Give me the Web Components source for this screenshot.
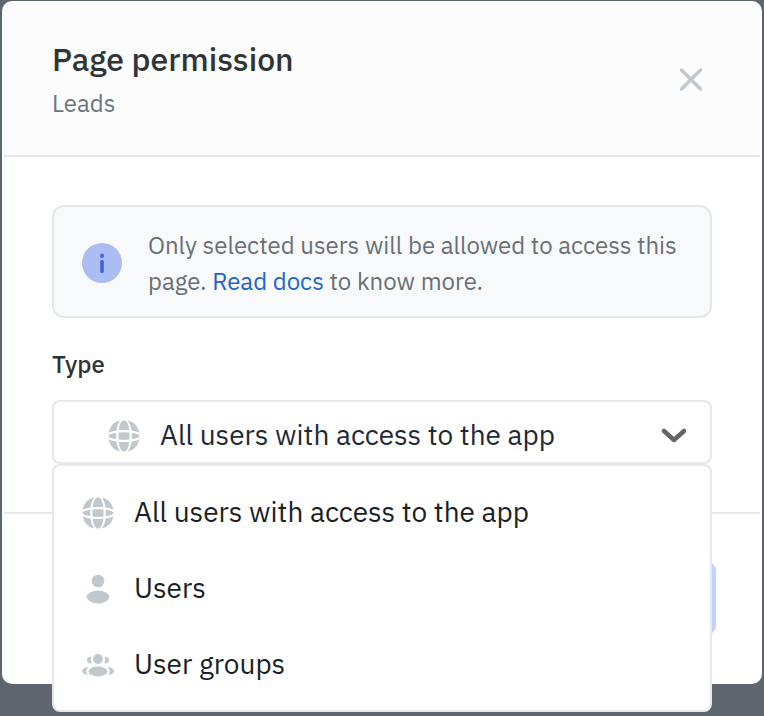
<!DOCTYPE html>
<html lang="en">
<head>
<meta charset="utf-8">
<meta name="viewport" content="width=device-width, initial-scale=1">
<title>Page permission</title>
<style>
	body {
		margin: 0;
		padding: 1px 2px 32px;
		background: #5D656F;
		color: #2F3437;
		font-family: "IBM Plex Sans", Roboto, "Liberation Sans", sans-serif;
		font-size: 24px;
		line-height: 36px;
	}
</style>
</head>
<body>
<perm-dialog heading="Page permission" subheading="Leads">
	<perm-info>Only selected users will be allowed to access this page. <a href="#docs">Read docs</a> to know more.</perm-info>
	<perm-select label="Type"></perm-select>
</perm-dialog>

<script>
const icons = {
	globe: `<path d="M12 0.500C5.500 2 1.800 6.500 0.600 12.700Q3.500 11 8.400 10.400Q9 4.500 12 0.500ZM20 0.500C26.500 2 30.200 6.500 31.400 12.700Q28.500 11 23.600 10.400Q23 4.500 20 0.500Z" fill="currentColor"/>
		<path d="M12 31.500C5.500 30 1.800 25.500 0.600 19.300Q3.500 21 8.400 21.600Q9 27.500 12 31.500ZM20 31.500C26.500 30 30.200 25.500 31.400 19.300Q28.500 21 23.600 21.600Q23 27.500 20 31.500Z" fill="currentColor"/>
		<path d="M10.700 10.200Q11.800 0.500 16 0.200Q20.200 0.500 21.300 10.200Q16 9.800 10.700 10.200ZM10.700 21.800Q11.800 31.500 16 31.800Q20.200 31.500 21.300 21.800Q16 22.200 10.700 21.800Z" fill="currentColor"/>
		<path d="M10.500 12.500Q16 12 21.500 12.500V19.500Q16 20 10.500 19.500ZM8.200 12.800V19.200Q1.500 18.200 0.200 16Q1.500 13.800 8.200 12.800ZM23.800 12.800V19.200Q30.500 18.200 31.800 16Q30.500 13.800 23.800 12.800Z" fill="currentColor"/>`,
	user: `<g fill="currentColor">
			<circle cx="16" cy="8" r="6.300"/>
			<ellipse cx="16" cy="24" rx="11.300" ry="6.500"/>
		</g>`,
	group: `<g fill="currentColor">
			<circle cx="16" cy="10" r="5"/>
			<ellipse cx="16" cy="22.500" rx="9.500" ry="5"/>
			<path d="M9.300 7.800A3.400 3.400 0 1 0 9.700 14.200Q8 11 9.300 7.800ZM22.700 7.800A3.400 3.400 0 1 1 22.300 14.200Q24 11 22.700 7.800Z"/>
			<path d="M6.500 18.300C-1.800 18.300-2 25.500 5.800 26Q2.200 22 6.500 18.300ZM25.500 18.300C33.800 18.300 34 25.500 26.200 26Q29.800 22 25.500 18.300Z"/>
		</g>`,
};

class Icon extends HTMLElement {
	constructor() {
		super();
		this.attachShadow({mode: 'open'});
	}

	static get observedAttributes() {
		return ['name'];
	}

	attributeChangedCallback(attrName, oldVal, newVal) {
		this.shadowRoot.innerHTML = `
		<style>
		:host {
			display: block;
			flex: none;
			width: 32px;
			height: 32px;
			color: #C1C8CD;
		}

		svg {
			display: block;
		}
		</style>
		<svg viewBox="0 0 32 32" width="32" height="32" aria-hidden="true">${icons[newVal] || ''}</svg>`;
	}
}
window.customElements.define('perm-icon', Icon);

class Info extends HTMLElement {
	constructor() {
		super();
		let shadowRoot = this.attachShadow({mode: 'open'});
		shadowRoot.innerHTML = `
		<style>
		:host {
			display: flex;
			align-items: center;
			gap: 26px;
			padding: 20px 28px 17px;
			border: 2px solid #E4E7EB;
			border-radius: 12px;
			background: #F8F9FB;
			color: #687076;
		}

		svg {
			flex: none;
		}

		::slotted(a) {
			color: #1B66C9;
			text-decoration: none;
		}
		</style>
		<svg width="40" height="40" viewBox="0 0 40 40" aria-hidden="true">
			<circle cx="20" cy="20" r="20" fill="#ACBDF2"/>
			<rect x="18.200" y="10.500" width="3.600" height="4.500" rx="1.800" fill="#3E63DD"/>
			<rect x="18.200" y="17" width="3.600" height="13" rx="1.500" fill="#3E63DD"/>
		</svg>
		<div><slot></slot></div>`;
	}
}
window.customElements.define('perm-info', Info);

class Select extends HTMLElement {
	constructor() {
		super();
		let shadowRoot = this.attachShadow({mode: 'open'});
		shadowRoot.innerHTML = `
		<style>
		:host {
			display: block;
		}

		label {
			display: block;
			margin-bottom: 18px;
			font-weight: 500;
		}

		.field {
			position: relative;
		}

		.control {
			display: grid;
			grid-template-columns: 54px 32px 1fr 26px 24px;
			align-items: center;
			height: 60px;
			border: 2px solid #E4E7EB;
			border-radius: 8px;
			background: #FFF;
		}

		.control > * {
			grid-row: 1;
		}

		.control perm-icon,
		.control svg {
			margin-top: 8px;
			z-index: 1;
			pointer-events: none;
		}

		.control perm-icon {
			grid-column: 2;
		}

		.control svg {
			grid-column: 4;
		}

		select {
			grid-column: 1 / -1;
			width: 100%;
			height: 60px;
			padding: 6px 60px 0 106px;
			border: 0;
			border-radius: 8px;
			outline: 0;
			appearance: none;
			background: transparent;
			color: #1F2937;
			font: inherit;
			font-size: 28px;
			line-height: 40px;
			cursor: pointer;
		}

		ul {
			position: absolute;
			top: 100%;
			left: 0;
			right: 0;
			margin: 0;
			padding: 8px 0;
			border: 2px solid #E4E7EB;
			border-radius: 8px;
			background: #FFF;
			list-style: none;
		}

		ul[hidden] {
			display: none;
		}

		li button {
			display: flex;
			align-items: center;
			gap: 20px;
			width: 100%;
			height: 76px;
			padding: 0 28px;
			border: 0;
			background: transparent;
			color: #1B1F24;
			font: inherit;
			font-size: 28px;
			line-height: 40px;
			text-align: left;
			cursor: pointer;
		}

		li perm-icon {
			margin-top: 2px;
		}

		li button:hover {
			background: #F8F9FB;
		}
		</style>
		<label for="type"></label>
		<div class="field">
			<div class="control">
				<select id="type">
					<option value="globe">All users with access to the app</option>
					<option value="user">Users</option>
					<option value="group">User groups</option>
				</select>
				<perm-icon name="globe"></perm-icon>
				<svg width="26" height="16" viewBox="0 0 26 16" aria-hidden="true">
					<path d="M4 3L14 12L24 3" fill="none" stroke="#666" stroke-width="4.500" stroke-linecap="round" stroke-linejoin="round"/>
				</svg>
			</div>
			<ul>
				<li><button type="button" value="globe"><perm-icon name="globe"></perm-icon>All users with access to the app</button></li>
				<li><button type="button" value="user"><perm-icon name="user"></perm-icon>Users</button></li>
				<li><button type="button" value="group"><perm-icon name="group"></perm-icon>User groups</button></li>
			</ul>
		</div>`;
		let select = shadowRoot.querySelector('select');
		let menu = shadowRoot.querySelector('ul');
		let icon = shadowRoot.querySelector('.control perm-icon');
		// our own menu opens in place of the native one
		select.addEventListener('mousedown', event => {
			event.preventDefault();
			menu.hidden = !menu.hidden;
		});
		select.addEventListener('change', () => icon.setAttribute('name', select.value));
		menu.addEventListener('click', event => {
			let button = event.target.closest('button');
			if (!button) return;
			select.value = button.value;
			icon.setAttribute('name', button.value);
			menu.hidden = true;
		});
	}

	static get observedAttributes() {
		return ['label'];
	}

	attributeChangedCallback(attrName, oldVal, newVal) {
		this.shadowRoot.querySelector('label').textContent = newVal;
	}
}
window.customElements.define('perm-select', Select);

class Dialog extends HTMLElement {
	constructor() {
		super();
		let shadowRoot = this.attachShadow({mode: 'open'});
		shadowRoot.innerHTML = `
		<style>
		:host {
			display: block;
			border: 2px solid #FFF;
			border-radius: 10px;
			background: #FFF;
		}

		header {
			display: flex;
			align-items: center;
			justify-content: space-between;
			padding: 34px 56px 34px 48px;
			border-bottom: 2px solid #E4E7EB;
			border-radius: 8px 8px 0 0;
			background: #FCFCFC;
		}

		h1 {
			margin: 0 0 4px;
			font-size: 32px;
			line-height: 44px;
			font-weight: 500;
		}

		p {
			margin: 0;
			color: #6B7580;
		}

		.close {
			display: flex;
			padding: 0;
			border: 0;
			background: transparent;
			cursor: pointer;
		}

		.body {
			display: flex;
			flex-direction: column;
			gap: 28px;
			padding: 48px;
		}

		footer {
			display: flex;
			justify-content: flex-end;
			padding: 46px 44px;
			border-top: 2px solid #E4E7EB;
		}

		.save {
			width: 200px;
			height: 76px;
			border: 0;
			border-radius: 12px;
			background: #C1D0FF;
			box-shadow: 0 2px 2px #F1F3F5;
		}
		</style>
		<header>
			<div>
				<h1></h1>
				<p></p>
			</div>
			<button class="close" type="button" aria-label="Close">
				<svg width="26" height="26" viewBox="0 0 26 26" aria-hidden="true">
					<path d="M3.500 4L22.500 23M22.500 4L3.500 23" stroke="#C1C8CD" stroke-width="3.500" stroke-linecap="round"/>
				</svg>
			</button>
		</header>
		<div class="body"><slot></slot></div>
		<footer><button class="save" type="button" aria-label="Save" disabled></button></footer>`;
	}

	static get observedAttributes() {
		return ['heading', 'subheading'];
	}

	attributeChangedCallback(attrName, oldVal, newVal) {
		let target = attrName == 'heading' ? 'h1' : 'p';
		this.shadowRoot.querySelector(target).textContent = newVal;
	}
}
window.customElements.define('perm-dialog', Dialog);
</script>
</body>
</html>
